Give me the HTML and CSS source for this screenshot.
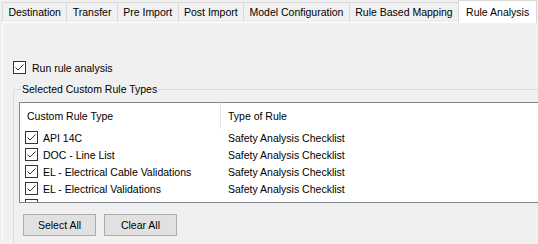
FILE: index.html
```html
<!DOCTYPE html>
<html>
<head>
<meta charset="utf-8">
<link rel="stylesheet" href="styles.css">
</head>
<body>
<div class="window">
  <div class="tabs">
    <div class="tab">Destination</div>
    <div class="tab">Transfer</div>
    <div class="tab">Pre Import</div>
    <div class="tab">Post Import</div>
    <div class="tab">Model Configuration</div>
    <div class="tab">Rule Based Mapping</div>
    <div class="tab active">Rule Analysis</div>
  </div>
  <div class="panel">
    <label class="run">
      <span class="cb"><svg width="13" height="13" viewBox="0 0 13 13"><rect x="0.5" y="0.5" width="12" height="12" fill="#fff" stroke="#333"/><polyline points="2.5,6.5 5,9 10.5,3.5" fill="none" stroke="#333" stroke-width="1"/></svg></span>
      <span>Run rule analysis</span>
    </label>
    <div class="group">
      <span class="legend">Selected Custom Rule Types</span>
      <div class="list">
        <div class="row head">
          <div class="c1">Custom Rule Type</div>
          <div class="c2">Type of Rule</div>
        </div>
        <div class="row">
          <div class="c1"><span class="cb"><svg width="13" height="13" viewBox="0 0 13 13"><rect x="0.5" y="0.5" width="12" height="12" fill="#fff" stroke="#333"/><polyline points="2.5,6.5 5,9 10.5,3.5" fill="none" stroke="#333" stroke-width="1"/></svg></span>API 14C</div>
          <div class="c2">Safety Analysis Checklist</div>
        </div>
        <div class="row">
          <div class="c1"><span class="cb"><svg width="13" height="13" viewBox="0 0 13 13"><rect x="0.5" y="0.5" width="12" height="12" fill="#fff" stroke="#333"/><polyline points="2.5,6.5 5,9 10.5,3.5" fill="none" stroke="#333" stroke-width="1"/></svg></span>DOC - Line List</div>
          <div class="c2">Safety Analysis Checklist</div>
        </div>
        <div class="row">
          <div class="c1"><span class="cb"><svg width="13" height="13" viewBox="0 0 13 13"><rect x="0.5" y="0.5" width="12" height="12" fill="#fff" stroke="#333"/><polyline points="2.5,6.5 5,9 10.5,3.5" fill="none" stroke="#333" stroke-width="1"/></svg></span>EL - Electrical Cable Validations</div>
          <div class="c2">Safety Analysis Checklist</div>
        </div>
        <div class="row">
          <div class="c1"><span class="cb"><svg width="13" height="13" viewBox="0 0 13 13"><rect x="0.5" y="0.5" width="12" height="12" fill="#fff" stroke="#333"/><polyline points="2.5,6.5 5,9 10.5,3.5" fill="none" stroke="#333" stroke-width="1"/></svg></span>EL - Electrical Validations</div>
          <div class="c2">Safety Analysis Checklist</div>
        </div>
        <div class="row">
          <div class="c1"><span class="cb"><svg width="13" height="13" viewBox="0 0 13 13"><rect x="0.5" y="0.5" width="12" height="12" fill="#fff" stroke="#333"/><polyline points="2.5,6.5 5,9 10.5,3.5" fill="none" stroke="#333" stroke-width="1"/></svg></span>INS - Cables</div>
          <div class="c2">Safety Analysis Checklist</div>
        </div>
      </div>
      <div class="buttons">
        <button class="btn">Select All</button>
        <button class="btn">Clear All</button>
      </div>
    </div>
  </div>
</div>
</body>
</html>
```
FILE: styles.css
```css
html, body {
  margin: 0;
  padding: 0;
  background: #f0f0f0;
  overflow: hidden;
}
body {
  width: 538px;
  height: 244px;
  font-family: "Liberation Sans", Arial, sans-serif;
  font-size: 10.5px;
  color: #000;
}
.window {
  width: 538px;
  height: 244px;
  overflow: hidden;
}
.tabs {
  display: flex;
  align-items: flex-end;
  height: 22px;
  padding-left: 2px;
  position: relative;
  z-index: 2;
}
.tab {
  height: 19px;
  line-height: 19px;
  padding: 0 5.4px;
  border: 1px solid #d9d9d9;
  border-bottom: 0;
  border-right: 0;
  background: #f0f0f0;
  white-space: nowrap;
}
.tab.active {
  height: 22px;
  line-height: 22px;
  background: #fff;
  border-right: 1px solid #d9d9d9;
  margin-bottom: -1px;
  padding: 0 7px;
}
.panel {
  margin-left: 2px;
  height: 221px;
  border-top: 1px solid #fff;
  border-left: 1px solid #fff;
  padding: 38px 0 0 10px;
  box-sizing: border-box;
  display: flex;
  flex-direction: column;
}
.run {
  display: flex;
  align-items: center;
  gap: 6px;
  height: 13px;
}
.cb {
  display: inline-flex;
  width: 13px;
  height: 13px;
}
.group {
  margin-top: 15px;
  border-top: 1px solid #dcdcdc;
  border-left: 1px solid #dcdcdc;
  display: flex;
  flex-direction: column;
  flex: 1;
}
.legend {
  align-self: flex-start;
  margin: -7px 0 0 7px;
  padding: 0 1px;
  line-height: 13px;
  background: #f0f0f0;
}
.list {
  margin: 6px 0 0 5px;
  width: 560px;
  height: 101px;
  box-sizing: border-box;
  border: 1px solid #828790;
  background: #fff;
  overflow: hidden;
}
.row {
  display: flex;
  height: 17px;
  align-items: center;
  white-space: nowrap;
}
.row.head {
  height: 26px;
}
.c1 {
  width: 200px;
  box-sizing: border-box;
  padding-left: 5px;
  display: flex;
  align-items: center;
  gap: 5px;
}
.head .c1 {
  padding-left: 7px;
  height: 100%;
  border-right: 1px solid #e5e5e5;
  width: 201px;
}
.c2 {
  padding-left: 8px;
}
.head .c2 {
  padding-left: 7px;
}
.buttons {
  display: flex;
  gap: 8px;
  margin: 11px 0 0 9px;
}
.btn {
  width: 73px;
  height: 22px;
  padding: 0;
  border: 1px solid #adadad;
  background: #e1e1e1;
  font-family: "Liberation Sans", Arial, sans-serif;
  font-size: 10.5px;
  color: #000;
}
```
